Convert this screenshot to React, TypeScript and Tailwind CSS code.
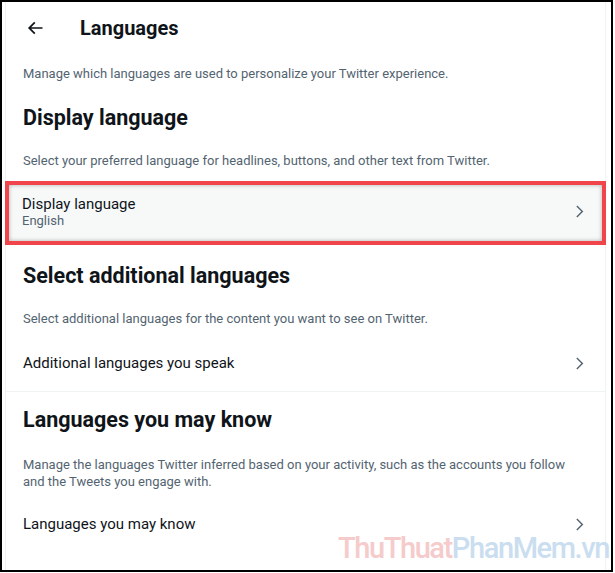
import React from "react";

function Chevron() {
  return (
    <svg viewBox="0 0 24 24" className="w-[17px] h-[17px] fill-[#536471] shrink-0">
      <path d="M14.586 12L7.543 4.96l1.414-1.42L17.414 12l-8.457 8.46-1.414-1.42L14.586 12z" />
    </svg>
  );
}

function BackArrow() {
  return (
    <svg viewBox="0 0 24 24" className="w-[20px] h-[20px] fill-[#0f1419]">
      <path d="M7.414 13l5.043 5.04-1.414 1.42L3.586 12l7.457-7.46 1.414 1.42L7.414 11H21v2H7.414z" />
    </svg>
  );
}

export default function App() {
  return (
    <div className="w-[613px] h-[572px] border-2 border-black bg-white relative overflow-hidden font-['Roboto',sans-serif] text-[#0f1419]">
      <div className="ml-[3px] w-[601px] h-full border-x border-[#eff3f4] flex flex-col">
        {/* Header */}
        <div className="mt-[14px] h-[24px] flex items-center">
          <div className="ml-[19px] w-[20px] flex items-center justify-center">
            <BackArrow />
          </div>
          <div className="ml-[35px] text-[20px] leading-[24px] font-bold">Languages</div>
        </div>

        <p className="mt-[26px] pl-[17px] text-[13px] leading-[16px] text-[#536471]">
          Manage which languages are used to personalize your Twitter experience.
        </p>

        <h2 className="mt-[24px] pl-[17px] text-[21.5px] leading-[24px] font-bold">Display language</h2>

        <p className="mt-[23px] pl-[17px] text-[13px] leading-[16px] text-[#536471]">
          Select your preferred language for headlines, buttons, and other text from Twitter.
        </p>

        <div className="mt-[12px] -mx-[1px] h-[64px] border-[4px] border-[#f0454a] bg-[#f7f9f9] shadow-[inset_0_0_4px_rgba(0,0,0,0.3)] flex items-start justify-between pl-[13px] pr-[14px]">
          <div className="pt-[10px]">
            <div className="text-[15px] leading-[18px]">Display language</div>
            <div className="text-[13px] leading-[16px] text-[#536471]">English</div>
          </div>
          <div className="pt-[18px]">
            <Chevron />
          </div>
        </div>

        <h2 className="mt-[19px] pl-[17px] text-[21.5px] leading-[24px] font-bold">Select additional languages</h2>

        <p className="mt-[23px] pl-[17px] text-[13px] leading-[16px] text-[#536471]">
          Select additional languages for the content you want to see on Twitter.
        </p>

        <div className="pt-[27px] pb-[19px] pl-[17px] pr-[17px] flex items-center justify-between border-b border-[#eff3f4]">
          <span className="text-[15px] leading-[18px]">Additional languages you speak</span>
          <Chevron />
        </div>

        <h2 className="mt-[16px] pl-[17px] text-[21.5px] leading-[24px] font-bold">Languages you may know</h2>

        <p className="mt-[24px] pl-[17px] pr-[17px] text-[13px] leading-[17px] text-[#536471]">
          Manage the languages Twitter inferred based on your activity, such as the accounts you follow and the Tweets you engage with.
        </p>

        <div className="mt-[25px] pl-[17px] pr-[17px] flex items-center justify-between">
          <span className="text-[15px] leading-[18px]">Languages you may know</span>
          <Chevron />
        </div>
      </div>

      <div className="absolute right-[2px] bottom-[6px] text-[29px] leading-[32px] tracking-[-1.4px] font-medium opacity-90">
        <span className="text-[#f5c6c6]">ThuThuat</span>
        <span className="text-[#c5dbef]">PhanMem.vn</span>
      </div>
    </div>
  );
}
